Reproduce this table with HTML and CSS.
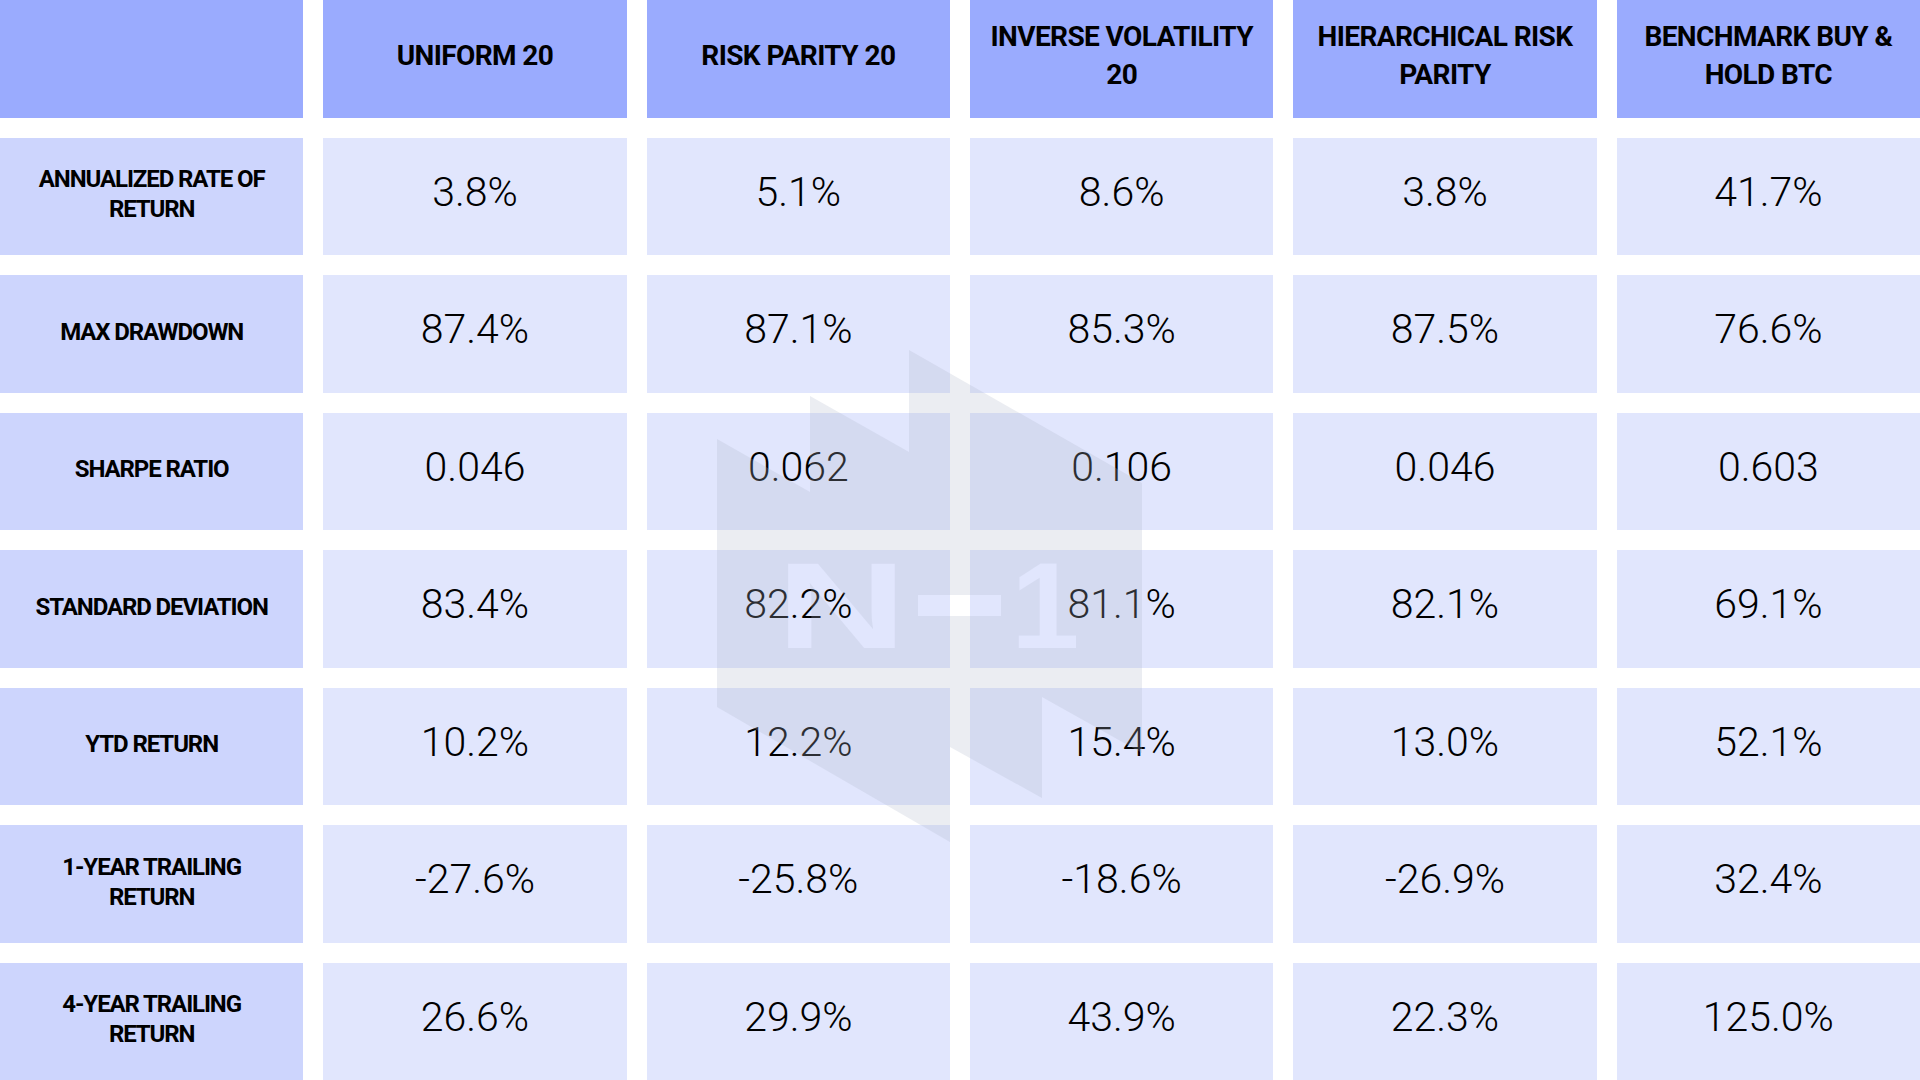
FILE: index.html
```html
<!DOCTYPE html>
<html lang="en">
<head>
<meta charset="utf-8">
<title>Strategy comparison</title>
<link rel="stylesheet" href="styles.css">
</head>
<body>
<main class="page">
  <div class="grid">
    <div class="cell head"></div>
    <div class="cell head">UNIFORM 20</div>
    <div class="cell head">RISK PARITY 20</div>
    <div class="cell head">INVERSE VOLATILITY<br>20</div>
    <div class="cell head">HIERARCHICAL RISK<br>PARITY</div>
    <div class="cell head">BENCHMARK BUY &amp;<br>HOLD BTC</div>

    <div class="cell label">ANNUALIZED RATE OF<br>RETURN</div>
    <div class="cell val">3.8%</div>
    <div class="cell val">5.1%</div>
    <div class="cell val">8.6%</div>
    <div class="cell val">3.8%</div>
    <div class="cell val">41.7%</div>

    <div class="cell label">MAX DRAWDOWN</div>
    <div class="cell val">87.4%</div>
    <div class="cell val">87.1%</div>
    <div class="cell val">85.3%</div>
    <div class="cell val">87.5%</div>
    <div class="cell val">76.6%</div>

    <div class="cell label">SHARPE RATIO</div>
    <div class="cell val">0.046</div>
    <div class="cell val">0.062</div>
    <div class="cell val">0.106</div>
    <div class="cell val">0.046</div>
    <div class="cell val">0.603</div>

    <div class="cell label">STANDARD DEVIATION</div>
    <div class="cell val">83.4%</div>
    <div class="cell val">82.2%</div>
    <div class="cell val">81.1%</div>
    <div class="cell val">82.1%</div>
    <div class="cell val">69.1%</div>

    <div class="cell label">YTD RETURN</div>
    <div class="cell val">10.2%</div>
    <div class="cell val">12.2%</div>
    <div class="cell val">15.4%</div>
    <div class="cell val">13.0%</div>
    <div class="cell val">52.1%</div>

    <div class="cell label">1-YEAR TRAILING<br>RETURN</div>
    <div class="cell val">-27.6%</div>
    <div class="cell val">-25.8%</div>
    <div class="cell val">-18.6%</div>
    <div class="cell val">-26.9%</div>
    <div class="cell val">32.4%</div>

    <div class="cell label">4-YEAR TRAILING<br>RETURN</div>
    <div class="cell val">26.6%</div>
    <div class="cell val">29.9%</div>
    <div class="cell val">43.9%</div>
    <div class="cell val">22.3%</div>
    <div class="cell val">125.0%</div>
  </div>

  <svg class="watermark" width="1920" height="1080" viewBox="0 0 1920 1080" aria-hidden="true">
    <defs>
      <mask id="wm-cut" maskUnits="userSpaceOnUse" x="0" y="0" width="1920" height="1080">
        <rect x="0" y="0" width="1920" height="1080" fill="#fff"/>
        <text x="776" y="648" font-family="Liberation Sans, Arial, sans-serif" font-weight="700" font-size="123" textLength="131" lengthAdjust="spacingAndGlyphs" fill="#000">N</text>
        <rect x="918" y="595" width="83" height="21" fill="#000"/>
        <text x="1011" y="648" font-family="Liberation Sans, Arial, sans-serif" font-weight="700" font-size="123" fill="#000">1</text>
      </mask>
    </defs>
    <polygon mask="url(#wm-cut)" fill="rgba(175,183,203,0.25)"
      points="717,439 810,492 810,396 909,452 909,350 1142,483 1142,753 1042,697 1042,798 950,747 950,842 717,707"/>
  </svg>
</main>
</body>
</html>
```

FILE: styles.css
```css
html, body {
  margin: 0;
  padding: 0;
  background: #ffffff;
}

.page {
  position: relative;
  width: 1920px;
  height: 1080px;
  overflow: hidden;
}

.grid {
  display: grid;
  grid-template-columns: repeat(6, 1fr);
  grid-template-rows: repeat(8, 1fr);
  column-gap: 20px;
  row-gap: 20px;
  width: 1920px;
  height: 1080px;
}

.cell {
  display: flex;
  align-items: center;
  justify-content: center;
  text-align: center;
  color: #000;
  box-sizing: border-box;
}

.head {
  background: #9aabfe;
  font-family: Roboto, "Liberation Sans", sans-serif;
  font-weight: 700;
  font-size: 28px;
  line-height: 38px;
  letter-spacing: -0.6px;
  padding-bottom: 6px;
}

.label {
  background: #cdd5fd;
  font-family: Roboto, "Liberation Sans", sans-serif;
  font-weight: 700;
  font-size: 24px;
  line-height: 30px;
  letter-spacing: -1.1px;
  padding-bottom: 4px;
}

.val {
  background: #e1e6fd;
  font-family: Roboto, "Liberation Sans", sans-serif;
  font-weight: 300;
  font-size: 41px;
  line-height: 48px;
  padding-bottom: 9px;
}

.watermark {
  position: absolute;
  left: 0;
  top: 0;
  pointer-events: none;
}
```
